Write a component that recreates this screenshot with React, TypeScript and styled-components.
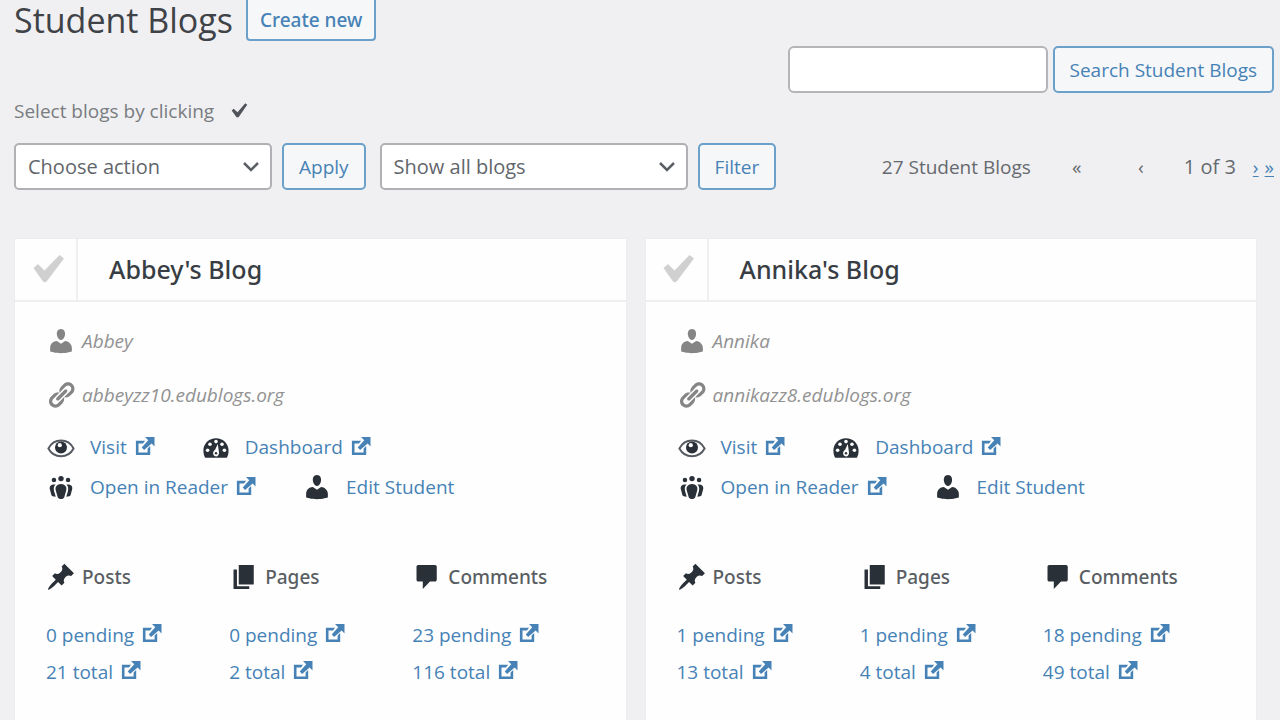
import React from 'react';
import styled, { createGlobalStyle } from 'styled-components';

const GlobalStyle = createGlobalStyle`
  *, *::before, *::after { box-sizing: border-box; }
  body {
    margin: 0;
    background: #f0f0f2;
    color: #50575e;
    font: 19px/28px "Open Sans", "Noto Sans", sans-serif;
  }
  h1, h2, h3, p, ul { margin: 0; padding: 0; }
  ul { list-style: none; }
  button, input, select { font: inherit; }
`;

const blue = '#4682b6';
const ink = '#2a3038';

const Page = styled.main`
  min-height: 100vh;
  display: flex;
  flex-direction: column;
`;

const Header = styled.header`
  display: flex;
  align-items: flex-start;
  gap: 13px;
  padding-left: 14px;
`;

const PageTitle = styled.h1`
  font-size: 34px;
  line-height: 41px;
  font-weight: 400;
  color: #3f4247;
`;

const Button = styled.button`
  height: 47px;
  padding: 0 15px;
  border: 2px solid #6ba0cb;
  border-radius: 5px;
  background: #f6f7f8;
  color: ${blue};
  white-space: nowrap;
  cursor: pointer;
`;

const CreateButton = styled(Button)`
  height: 41px;
  padding: 0 12px;
  border-top: 0;
  border-radius: 0 0 4px 4px;
  font-family: "Noto Sans", "Open Sans", sans-serif;
  font-weight: 500;
`;

const SearchForm = styled.form`
  display: flex;
  justify-content: flex-end;
  gap: 5px;
  padding: 5px 6px 0 14px;
`;

const SearchInput = styled.input`
  width: 260px;
  height: 47px;
  padding: 0 12px;
  border: 2px solid #b4b5b8;
  border-radius: 6px;
  background: #fff;
`;

const Hint = styled.p`
  display: flex;
  align-items: center;
  gap: 9px;
  padding: 3px 14px 0;
  color: #797c80;
`;

const Toolbar = styled.div`
  display: flex;
  align-items: center;
  gap: 10px;
  padding: 17px 6px 0 14px;
`;

const SelectWrap = styled.div<{ $width: number; $gapBefore?: number }>`
  position: relative;
  width: ${p => p.$width}px;
  margin-left: ${p => p.$gapBefore ?? 0}px;
`;

const Select = styled.select`
  width: 100%;
  height: 47px;
  padding: 0 40px 0 12px;
  border: 2px solid #b0b1b4;
  border-radius: 5px;
  background: #fff;
  color: #62666b;
  font-size: 20px;
  appearance: none;
`;

const Chevron = styled.svg`
  position: absolute;
  right: 13px;
  top: 18px;
  pointer-events: none;
`;

const Pagination = styled.nav`
  display: flex;
  align-items: center;
  margin-left: auto;
  color: #66696e;
  white-space: nowrap;
`;

const Count = styled.span`
  margin-right: 14px;
`;

const PagerButton = styled.button`
  width: 64px;
  padding: 0;
  border: 0;
  background: none;
  color: #66696e;
`;

const PageNumber = styled.span`
  margin: 0 17px 0 11px;
  font-size: 20px;
`;

const PagerLink = styled.a`
  color: ${blue};
  text-underline-offset: 2px;
  & + & { margin-left: 6px; }
`;

const Cards = styled.div`
  flex: 1;
  display: grid;
  grid-template-columns: 1fr 1fr;
  gap: 18px;
  padding: 48px 23px 0 14px;
`;

const Card = styled.article`
  background: #fefefe;
  border: 1px solid #ececee;
  border-bottom: 0;
`;

const CardHeader = styled.header`
  display: flex;
  height: 63px;
  border-bottom: 2px solid #efeff1;
`;

const Pick = styled.label`
  width: 63px;
  flex: none;
  display: grid;
  place-items: center;
  padding-left: 6px;
  border-right: 2px solid #efeff1;
  color: #d0d0d0;
  cursor: pointer;
  input {
    appearance: none;
    margin: 0;
    grid-area: 1 / 1;
    width: 40px;
    height: 40px;
  }
  svg { grid-area: 1 / 1; pointer-events: none; }
  input:checked + svg { color: ${blue}; }
`;

const CardTitle = styled.h2`
  padding-left: 31px;
  font-family: "Noto Sans", "Open Sans", sans-serif;
  font-size: 25px;
  line-height: 60px;
  font-weight: 500;
  color: #383d44;
`;

const CardBody = styled.div`
  padding: 24px 30px 20px 31px;
`;

const Meta = styled.p`
  display: flex;
  align-items: center;
  gap: 6px;
  height: 30px;
  margin-bottom: 24px;
  font-style: italic;
  color: #929292;
  svg { color: #858585; }
`;

const ActionList = styled.div`
  margin-top: -7px;
`;

const Actions = styled.ul`
  display: flex;
  gap: 43px;
  height: 40px;
`;

const Action = styled.li`
  display: flex;
  align-items: center;
  gap: 14px;
  color: ${ink};
`;

const Link = styled.a`
  display: inline-flex;
  align-items: center;
  gap: 5px;
  color: ${blue};
  text-decoration: none;
  white-space: nowrap;
  svg { margin-bottom: 3px; }
`;

const Stats = styled.div`
  display: grid;
  grid-template-columns: repeat(3, 1fr);
  margin-top: 55px;
`;

const StatTitle = styled.h3`
  display: flex;
  align-items: center;
  gap: 6px;
  height: 30px;
  margin-bottom: 24px;
  font-family: "Noto Sans", "Open Sans", sans-serif;
  font-size: 19px;
  font-weight: 500;
  color: #5a5e63;
  svg { color: ${ink}; }
`;

const StatRow = styled.div`
  height: 37px;
  display: flex;
  align-items: center;
`;

const Icon = styled.svg.attrs({ viewBox: '0 0 20 20', fill: 'currentColor', 'aria-hidden': true })`
  flex: none;
  display: block;
`;

const UserIcon = () => (
  <Icon width={30} height={30}>
    <path d="M10 9.25c-2.27 0-2.73-3.44-2.73-3.44C7 4.02 7.82 2 9.97 2c2.16 0 2.98 2.02 2.71 3.81 0 0-.41 3.44-2.68 3.44zm0 2.57L12.72 10c2.39 0 4.52 2.33 4.52 4.53v2.49s-3.65 1.13-7.24 1.13c-3.65 0-7.24-1.13-7.24-1.13v-2.49c0-2.25 1.94-4.48 4.47-4.48z" />
  </Icon>
);

const LinkIcon = () => (
  <Icon width={30} height={30}>
    <path d="M17.74 2.76c1.68 1.69 1.68 4.41 0 6.1l-1.53 1.52c-1.12 1.12-2.7 1.47-4.14 1.09l2.62-2.61.76-.77.76-.76c.84-.84.84-2.2 0-3.04-.84-.85-2.2-.85-3.04 0l-.77.76-3.38 3.38c-.37-1.44-.02-3.02 1.1-4.14l1.52-1.53c1.69-1.68 4.42-1.68 6.1 0zM8.59 13.43l5.34-5.34c.42-.42.42-1.1 0-1.52-.44-.43-1.13-.39-1.53 0l-5.33 5.34c-.42.42-.42 1.1 0 1.52.44.43 1.13.39 1.52 0zm-.76 2.29l4.14-4.15c.38 1.44.03 3.02-1.09 4.14l-1.52 1.53c-1.69 1.68-4.41 1.68-6.1 0-1.68-1.68-1.68-4.42 0-6.1l1.53-1.52c1.12-1.12 2.7-1.47 4.14-1.1l-4.14 4.15c-.85.84-.85 2.2 0 3.05.84.84 2.2.84 3.04 0z" />
  </Icon>
);

const EyeIcon = () => (
  <Icon width={30} height={30}>
    <path d="M1.6 11C3.4 7.6 6.5 5.7 10 5.7s6.6 1.9 8.4 5.3c-1.8 3.3-4.9 5.2-8.4 5.2S3.4 14.3 1.6 11z" fill="none" stroke="currentColor" strokeWidth="1.3" opacity=".8" />
    <circle cx="10" cy="10.4" r="4" />
    <circle cx="9.2" cy="8.8" r="1.4" fill="#fff" />
  </Icon>
);

const DashboardIcon = () => (
  <Icon width={30} height={30}>
    <path d="M2.8 17.2h14.4c.8-1.4 1.2-3 1.2-4.9 0-4.6-3.7-8.2-8.4-8.2s-8.4 3.6-8.4 8.2c0 1.9.4 3.5 1.2 4.9z" />
    <g fill="#fff">
      <circle cx="10" cy="6.4" r="1.2" />
      <circle cx="6" cy="8.2" r="1.2" />
      <circle cx="14" cy="8.2" r="1.2" />
      <circle cx="4.4" cy="12.2" r="1.2" />
      <circle cx="15.6" cy="12.2" r="1.2" />
      <path d="M11.2 8l.8 5.7c.1 1.6-.8 2.6-2 2.6s-2.2-1.2-1.9-2.6c.2-.9.7-1.5 1.3-1.9z" />
    </g>
    <circle cx="10" cy="14.2" r=".8" />
  </Icon>
);

const GroupIcon = () => (
  <Icon width={30} height={30}>
    <circle cx="10" cy="4.4" r="1.8" />
    <circle cx="5.3" cy="5.4" r="1.5" />
    <circle cx="14.7" cy="5.4" r="1.5" />
    <path d="M12.17 16.79l1.25-4.3C14.2 10 12.71 8 10 8c-2.72 0-4.21 2-3.44 4.49l1.26 4.3C8.05 17.51 9 18 10 18c.98 0 1.94-.49 2.17-1.21z" />
    <path d="M5.5 8.3c-2.2 0-3.5 1.3-2.9 3.4l1 3.6c.2.7 1.1 1.1 2.9 1.2L5.4 12.8C4.9 10.9 5.3 9.4 6.4 8.4zM14.5 8.3c2.2 0 3.5 1.3 2.9 3.4l-1 3.6c-.2.7-1.1 1.1-2.9 1.2l1.1-3.7c.5-1.9.1-3.4-1-4.4z" />
  </Icon>
);

const PinIcon = () => (
  <Icon width={30} height={30}>
    <path d="M10.44 3.02l1.82-1.82 6.36 6.35-1.83 1.82c-1.05-.68-2.48-.57-3.41.36l-.75.75c-.92.93-1.04 2.35-.35 3.41l-1.83 1.82-2.41-2.41-2.8 2.79c-.42.42-3.38 2.71-3.8 2.29s1.86-3.39 2.28-3.81l2.79-2.79L4.1 9.36l1.83-1.82c1.05.69 2.48.57 3.4-.36l.75-.75c.93-.92 1.05-2.35.36-3.41z" />
  </Icon>
);

const PagesIcon = () => (
  <Icon width={30} height={30}>
    <path d="M6.5 15V2H16.5v13zM5.3 16.2H13.5V18H3V5h2.3z" />
  </Icon>
);

const CommentIcon = () => (
  <Icon width={30} height={30}>
    <path d="M4.2 2h11.1c.7 0 1.2.5 1.2 1.2v8.6c0 .7-.5 1.2-1.2 1.2H12l-4.8 5V13h-3C3.5 13 3 12.5 3 11.8V3.2C3 2.5 3.5 2 4.2 2z" />
  </Icon>
);

const ExternalIcon = () => (
  <Icon width={26} height={26}>
    <path d="M10 3H17.3V10.3L15.1 8.1 9.3 13 7.5 11.2 12.5 5.5zM12 15v-3l2-2v7H3V6h7L8.5 8H5v7z" />
  </Icon>
);

const SmallTick = () => (
  <Icon width={30} height={30}>
    <path d="M14.83 4.89l1.34.94-5.81 8.38H9.02L5.78 9.67l1.34-1.25 2.57 2.4z" fill="#50545a" />
  </Icon>
);

const LargeTick = () => (
  <svg width="34" height="30" viewBox="0 0 34 30" fill="currentColor" aria-hidden="true">
    <path d="M1.5 13L6 9l6.5 6.5L27.5 0l4.5 3.5L15 26c-1.2 1.6-3.2 1.6-4.4 0z" />
  </svg>
);

const DropDown = ({ label, width, gapBefore }: { label: string; width: number; gapBefore?: number }) => (
  <SelectWrap $width={width} $gapBefore={gapBefore}>
    <Select aria-label={label} defaultValue={label}>
      <option>{label}</option>
    </Select>
    <Chevron width="16" height="12" viewBox="0 0 16 12" fill="none" stroke="#5c6066" strokeWidth="2.5">
      <path d="M1 2l7 7 7-7" />
    </Chevron>
  </SelectWrap>
);

const ExternalLink = ({ children }: { children: React.ReactNode }) => (
  <Link href="#">
    {children}
    <ExternalIcon />
  </Link>
);

type Blog = {
  title: string;
  student: string;
  url: string;
  posts: [number, number];
  pages: [number, number];
  comments: [number, number];
};

const blogs: Blog[] = [
  { title: "Abbey's Blog", student: 'Abbey', url: 'abbeyzz10.edublogs.org', posts: [0, 21], pages: [0, 2], comments: [23, 116] },
  { title: "Annika's Blog", student: 'Annika', url: 'annikazz8.edublogs.org', posts: [1, 13], pages: [1, 4], comments: [18, 49] },
];

const Stat = ({ icon, name, counts }: { icon: React.ReactNode; name: string; counts: [number, number] }) => (
  <section>
    <StatTitle>{icon}{name}</StatTitle>
    <StatRow><ExternalLink>{`${counts[0]} pending`}</ExternalLink></StatRow>
    <StatRow><ExternalLink>{`${counts[1]} total`}</ExternalLink></StatRow>
  </section>
);

const BlogCard = ({ blog }: { blog: Blog }) => (
  <Card>
    <CardHeader>
      <Pick>
        <input type="checkbox" aria-label={`Select ${blog.title}`} />
        <LargeTick />
      </Pick>
      <CardTitle>{blog.title}</CardTitle>
    </CardHeader>
    <CardBody>
      <Meta><UserIcon />{blog.student}</Meta>
      <Meta><LinkIcon />{blog.url}</Meta>
      <ActionList>
        <Actions>
          <Action><EyeIcon /><ExternalLink>Visit</ExternalLink></Action>
          <Action><DashboardIcon /><ExternalLink>Dashboard</ExternalLink></Action>
        </Actions>
        <Actions>
          <Action><GroupIcon /><ExternalLink>Open in Reader</ExternalLink></Action>
          <Action><UserIcon /><Link href="#">Edit Student</Link></Action>
        </Actions>
      </ActionList>
      <Stats>
        <Stat icon={<PinIcon />} name="Posts" counts={blog.posts} />
        <Stat icon={<PagesIcon />} name="Pages" counts={blog.pages} />
        <Stat icon={<CommentIcon />} name="Comments" counts={blog.comments} />
      </Stats>
    </CardBody>
  </Card>
);

export default function App() {
  return (
    <Page>
      <GlobalStyle />
      <Header>
        <PageTitle>Student Blogs</PageTitle>
        <CreateButton type="button">Create new</CreateButton>
      </Header>
      <SearchForm onSubmit={e => e.preventDefault()}>
        <SearchInput type="search" aria-label="Search Student Blogs" />
        <Button type="submit">Search Student Blogs</Button>
      </SearchForm>
      <Hint>Select blogs by clicking<SmallTick /></Hint>
      <Toolbar>
        <DropDown label="Choose action" width={258} />
        <Button type="button">Apply</Button>
        <DropDown label="Show all blogs" width={308} gapBefore={4} />
        <Button type="button">Filter</Button>
        <Pagination aria-label="Pages of blogs">
          <Count>27 Student Blogs</Count>
          <PagerButton type="button" disabled aria-label="First page">«</PagerButton>
          <PagerButton type="button" disabled aria-label="Previous page">‹</PagerButton>
          <PageNumber>1 of 3</PageNumber>
          <PagerLink href="#" aria-label="Next page">›</PagerLink>
          <PagerLink href="#" aria-label="Last page">»</PagerLink>
        </Pagination>
      </Toolbar>
      <Cards>
        {blogs.map(blog => <BlogCard key={blog.title} blog={blog} />)}
      </Cards>
    </Page>
  );
}
